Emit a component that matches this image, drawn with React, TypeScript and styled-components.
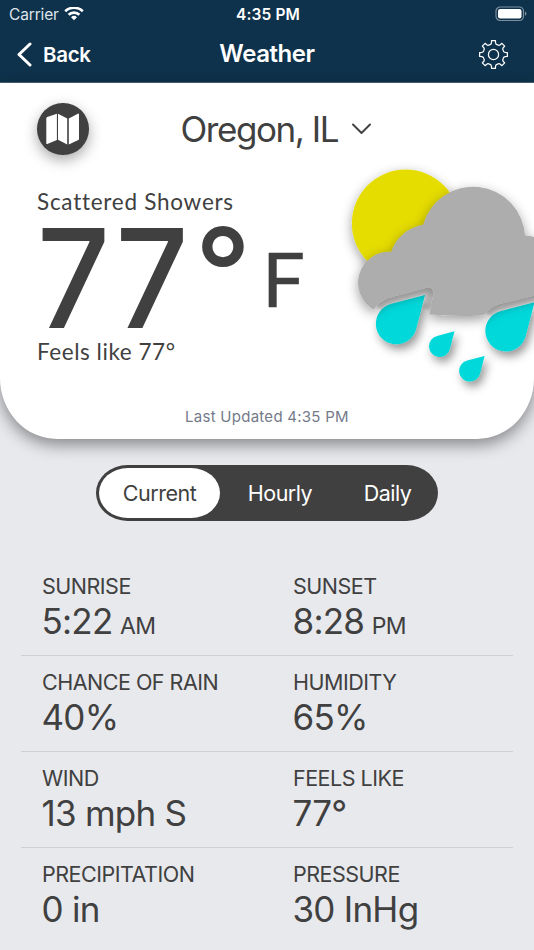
import React from "react";
import styled, { createGlobalStyle } from "styled-components";

const ink = "#404040";
const navy = "#0e324b";

const GlobalStyle = createGlobalStyle`
  * { box-sizing: border-box; }
  body { margin: 0; background: #e8e9ed; overflow: hidden; }
`;

const Screen = styled.main`
  display: flex;
  flex-direction: column;
  width: 534px;
  height: 950px;
  overflow: hidden;
  background: #e8e9ed;
  color: ${ink};
  font-family: Inter, "Liberation Sans", sans-serif;
`;

const Header = styled.header`
  height: 83px;
  flex: none;
  background: ${navy};
  border-bottom: 1px solid #45627a;
  color: #fff;
`;

const StatusBar = styled.div`
  display: grid;
  grid-template-columns: 1fr auto 1fr;
  align-items: center;
  height: 28px;
  padding: 0 7px 0 9px;
`;

const Carrier = styled.div`
  display: flex;
  align-items: center;
  gap: 5px;
  font-size: 15.5px;
  letter-spacing: -0.15px;
  color: #dfe5ea;
`;

const Clock = styled.div`
  font-size: 15.5px;
  font-weight: 600;
  letter-spacing: 0.1px;
`;

const BatterySlot = styled.div`
  display: flex;
  justify-content: flex-end;
  padding-bottom: 1px;
`;

const NavBar = styled.nav`
  display: grid;
  grid-template-columns: 1fr auto 1fr;
  align-items: center;
  height: 53px;
  padding: 0 25px 0 17px;
`;

const BackButton = styled.button`
  display: flex;
  align-items: center;
  gap: 11px;
  padding: 0;
  border: 0;
  background: none;
  color: inherit;
  font: 600 20.5px/26px Inter, sans-serif;
  letter-spacing: -0.3px;
`;

const Title = styled.h1`
  margin: 0 0 2px 8px;
  font-size: 24px;
  line-height: 28px;
  font-weight: 600;
  letter-spacing: -0.45px;
`;

const IconButton = styled.button`
  display: flex;
  justify-self: end;
  padding: 0;
  border: 0;
  background: none;
`;

const Hero = styled.section`
  display: flex;
  flex-direction: column;
  flex: none;
  height: 355.5px;
  background: #fff;
  border-radius: 0 0 57px 57px / 0 0 61px 61px;
  box-shadow: 0 6px 16px rgba(0, 0, 0, 0.42);
`;

const LocationRow = styled.div`
  display: flex;
  align-items: center;
  height: 82px;
  padding: 10px 0 0 37px;
`;

const MapButton = styled.button`
  display: flex;
  width: 51.5px;
  height: 51.5px;
  padding: 0;
  border: 0;
  border-radius: 50%;
  background: ${ink};
  box-shadow: 0 5px 14px rgba(0, 0, 0, 0.34);
`;

const Place = styled.div`
  display: flex;
  align-items: center;
  gap: 14px;
  margin-left: 92px;
  font-size: 35px;
  line-height: 42px;
  letter-spacing: -1.45px;
  white-space: nowrap;
`;

const Conditions = styled.div`
  display: flex;
  justify-content: space-between;
  height: 235px;
`;

const Reading = styled.div`
  padding: 23px 0 0 37px;
  font-family: Lato, sans-serif;
`;

const Phrase = styled.div<{ $tracking: number }>`
  height: 28px;
  font-size: 22.5px;
  line-height: 28px;
  letter-spacing: ${(p) => p.$tracking}px;
  white-space: nowrap;
`;

const Temperature = styled.div`
  display: flex;
  height: 122px;
  line-height: 122px;
`;

const Degrees = styled.span`
  width: 161px;
  font-family: Inter, sans-serif;
  font-size: 137.5px;
  font-weight: 500;
  line-height: 124px;
  letter-spacing: 3.2px;
  transform: scaleX(0.93);
  transform-origin: left;
`;

const DegreeSign = styled.span`
  width: 64px;
  font-size: 120px;
  font-weight: 700;
  line-height: 105px;
`;

const Unit = styled.span`
  font-size: 76px;
  padding-top: 1px;
  -webkit-text-stroke: 0.5px ${ink};
`;

const Updated = styled.div`
  margin-top: 6px;
  text-align: center;
  font-size: 15px;
  line-height: 22px;
  letter-spacing: 0.26px;
  color: #747a89;
`;

const Tabs = styled.div`
  display: grid;
  grid-template-columns: 121px 120px 1fr;
  flex: none;
  width: 342px;
  height: 56.5px;
  margin: 26px auto 0;
  padding: 3px;
  border-radius: 32px / 28.5px;
  background: ${ink};
`;

const Tab = styled.button<{ $active?: boolean }>`
  padding: 0;
  border: 0;
  border-radius: 30px / 26px;
  background: ${(p) => (p.$active ? "#fff" : "transparent")};
  color: ${(p) => (p.$active ? ink : "#fff")};
  font: 400 21.5px/26px Inter, sans-serif;
  letter-spacing: -0.5px;
`;

const Details = styled.div`
  margin: 39px 21px 0;
`;

const DetailRow = styled.div`
  display: grid;
  grid-template-columns: 251px 1fr;
  height: 96px;
  padding: 12px 0 0 21px;
  border-bottom: 1px solid #cfd0d4;
  &:last-child { border-bottom: 0; }
`;

const Label = styled.div`
  font-size: 21.5px;
  line-height: 28px;
  letter-spacing: -0.5px;
`;

const Value = styled.div`
  margin-left: -0.5px;
  font-size: 35px;
  line-height: 42px;
  letter-spacing: -0.75px;
`;

const Suffix = styled.span`
  margin-left: 7.5px;
  font-size: 23px;
  letter-spacing: -0.6px;
`;

const WifiIcon = () => (
  <svg width="20" height="15" viewBox="0 0 20 15" fill="none" stroke="#fff" strokeWidth="2.6">
    <path d="M1.2 4.3a12.6 12.6 0 0 1 17.6 0" />
    <path d="M4.6 7.8a7.7 7.7 0 0 1 10.8 0" />
    <path d="M7 10.2a4.3 4.3 0 0 1 6 0l-3 3.1z" fill="#fff" stroke="none" />
  </svg>
);

const BatteryIcon = () => (
  <svg width="32" height="16" viewBox="0 0 32 16">
    <rect x="1" y="1" width="27.5" height="13.5" rx="4.2" fill="none" stroke="#7c90a0" strokeWidth="1.2" />
    <rect x="3" y="3" width="23.5" height="9.5" rx="2.2" fill="#fff" />
    <path d="M30 5.6q3 2.2 0 4.4z" fill="#7c90a0" />
  </svg>
);

const BackIcon = () => (
  <svg width="15" height="25" viewBox="0 0 15 25" fill="none" stroke="#fff" strokeWidth="3" strokeLinecap="round" strokeLinejoin="round">
    <path d="M13 2 2 12.5 13 23" />
  </svg>
);

const polar = (r: number, deg: number) => {
  const a = (deg * Math.PI) / 180;
  return `${(r * Math.sin(a)).toFixed(2)} ${(-r * Math.cos(a)).toFixed(2)}`;
};

const gearPath =
  Array.from({ length: 8 }, (_, i) => {
    const a = i * 45;
    return `${i ? "L" : "M"}${polar(14, a - 8)}L${polar(14, a + 8)}L${polar(11.8, a + 10)}Q${polar(10.2, a + 13)} ${polar(10.5, a + 22.5)}Q${polar(10.2, a + 32)} ${polar(11.8, a + 35)}`;
  }).join("") + "Z";

const GearIcon = () => (
  <svg width="31" height="31" viewBox="-15.5 -15.5 31 31" fill="none" stroke="#fff" strokeWidth="1.25" strokeLinejoin="round">
    <path d={gearPath} />
    <circle r="5.1" />
  </svg>
);

const MapIcon = () => (
  <svg width="51.5" height="51.5" viewBox="37 103.2 51.5 51.5" fill="#fff">
    <path d="M47.2 117.3 56.9 114v26.2l-9.6 4q-1 .3-1-.8v-24.8q0-1 .9-1.3z" />
    <path d="M58 114l9.2 4.8v26L58 140z" />
    <path d="M68.8 118.8l9-4.9q1.2-.4 1.2.8v24.4q0 .8-.7 1.2l-9.5 4.4z" />
  </svg>
);

const ChevronIcon = () => (
  <svg width="19" height="12" viewBox="0 0 19 12" fill="none" stroke={ink} strokeWidth="1.9" strokeLinecap="round" strokeLinejoin="round">
    <path d="M1 1.5 9.5 10 18 1.5" />
  </svg>
);

const Art = styled.svg`
  flex: none;
  overflow: visible;
`;

const Drop = ({ x, y, scale = 1 }: { x: number; y: number; scale?: number }) => (
  <path
    transform={`translate(${x} ${y}) scale(${scale})`}
    d="M28.7-28.8-4.8-20A20.5 20.5 0 1 0 20 4.7Z"
    fill="#00d8da"
  />
);

const ShowersArt = () => (
  <Art width="194" height="235" viewBox="340 165 194 235">
    <defs>
      <filter id="soft" x="-30%" y="-30%" width="160%" height="160%">
        <feDropShadow dx="0" dy="4" stdDeviation="6" floodOpacity="0.38" />
      </filter>
      <filter id="rain" x="-50%" y="-50%" width="200%" height="200%">
        <feDropShadow dx="3" dy="5" stdDeviation="5" floodOpacity="0.42" />
      </filter>
      <filter id="edge" x="-20%" y="-50%" width="140%" height="200%">
        <feGaussianBlur stdDeviation="1.6" />
      </filter>
    </defs>
    <circle cx="405.7" cy="223.4" r="53.8" fill="#e5dc00" filter="url(#soft)" />
    <g fill="none" stroke="#d4d4d4" strokeWidth="9" filter="url(#edge)">
      <path d="M378 307Q381 303 389 300L426 290L430 292L427 309" />
      <path d="M488 314Q491 309 500 306.5L550 293" />
    </g>
    <g filter="url(#rain)">
      <Drop x={396.3} y={323.8} />
      <Drop x={505.8} y={331} />
      <Drop x={439.6} y={346.3} scale={0.52} />
      <Drop x={469.7} y={371} scale={0.52} />
    </g>
    <path
      filter="url(#soft)"
      fill="#adadad"
      d="M373.8 309.7A31 31 0 0 1 391.3 251.8A40 40 0 0 1 423 224.8A52 52 0 0 1 525 235.6Q534 236 548 242V292L499 304Q490 307 486 313Q483 316 478 315.5Q470 316 462 316L429.3 314.6L433.5 294Q433.8 286.5 427 287.6L388 298Q378 302 373.8 309.7Z"
    />
  </Art>
);

const details = [
  [["SUNRISE", "5:22", "AM"], ["SUNSET", "8:28", "PM"]],
  [["CHANCE OF RAIN", "40%"], ["HUMIDITY", "65%"]],
  [["WIND", "13 mph S"], ["FEELS LIKE", "77°"]],
  [["PRECIPITATION", "0 in"], ["PRESSURE", "30 InHg"]],
];

export default function App() {
  return (
    <Screen>
      <GlobalStyle />
      <Header>
        <StatusBar>
          <Carrier>Carrier <WifiIcon /></Carrier>
          <Clock>4:35 PM</Clock>
          <BatterySlot><BatteryIcon /></BatterySlot>
        </StatusBar>
        <NavBar>
          <BackButton><BackIcon />Back</BackButton>
          <Title>Weather</Title>
          <IconButton aria-label="Settings"><GearIcon /></IconButton>
        </NavBar>
      </Header>
      <Hero>
        <LocationRow>
          <MapButton aria-label="Map"><MapIcon /></MapButton>
          <Place>Oregon, IL <ChevronIcon /></Place>
        </LocationRow>
        <Conditions>
          <Reading>
            <Phrase $tracking={0.74}>Scattered Showers</Phrase>
            <Temperature>
              <Degrees>77</Degrees>
              <DegreeSign>°</DegreeSign>
              <Unit>F</Unit>
            </Temperature>
            <Phrase $tracking={0.55}>Feels like 77°</Phrase>
          </Reading>
          <ShowersArt />
        </Conditions>
        <Updated>Last Updated 4:35 PM</Updated>
      </Hero>
      <Tabs>
        <Tab $active>Current</Tab>
        <Tab>Hourly</Tab>
        <Tab>Daily</Tab>
      </Tabs>
      <Details>
        {details.map((row) => (
          <DetailRow key={row[0][0]}>
            {row.map(([label, value, suffix]) => (
              <div key={label}>
                <Label>{label}</Label>
                <Value>
                  {value}
                  {suffix && <Suffix>{suffix}</Suffix>}
                </Value>
              </div>
            ))}
          </DetailRow>
        ))}
      </Details>
    </Screen>
  );
}
